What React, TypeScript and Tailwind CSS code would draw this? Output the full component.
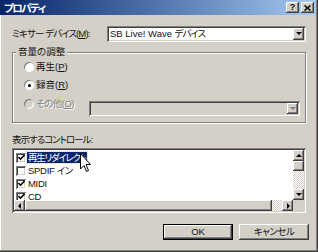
const raised =
  'shadow-[inset_-1px_-1px_#404040,inset_1px_1px_#ffffff,inset_-2px_-2px_#808080]';
const sunken =
  'shadow-[inset_1px_1px_#808080,inset_-1px_-1px_#ffffff,inset_2px_2px_#404040,inset_-2px_-2px_#d4d0c8]';

function Arrow({ dir, disabled }: { dir: 'up' | 'down' | 'left' | 'right'; disabled?: boolean }) {
  const pts = {
    up: '1,5 7,5 4,2',
    down: '1,2 7,2 4,5',
    left: '5,1 5,7 2,4',
    right: '3,1 3,7 6,4',
  }[dir];
  return (
    <svg width="8" height="8" viewBox="0 0 8 8">
      <polygon points={pts} fill={disabled ? '#808080' : '#000'} />
    </svg>
  );
}

function ScrollBtn({ dir, className = '' }: { dir: 'up' | 'down' | 'left' | 'right'; className?: string }) {
  return (
    <div className={`flex items-center justify-center bg-[#d4d0c8] ${raised} ${className}`}>
      <Arrow dir={dir} />
    </div>
  );
}

function Radio({ checked, disabled }: { checked?: boolean; disabled?: boolean }) {
  return (
    <div
      className={`flex h-[10px] w-[10px] items-center justify-center rounded-full shadow-[inset_1px_1px_#808080,inset_-1px_-1px_#ffffff] ${
        disabled ? 'bg-[#d4d0c8]' : 'bg-white'
      }`}
    >
      {checked && <div className="h-[3px] w-[3px] rounded-full bg-black" />}
    </div>
  );
}

function Check({ checked }: { checked?: boolean }) {
  return (
    <div className={`flex h-[10px] w-[10px] shrink-0 items-center justify-center bg-white ${sunken}`}>
      {checked && (
        <svg width="7" height="7" viewBox="0 0 7 7">
          <polyline points="0.5,3 2.5,5.2 6.5,1" fill="none" stroke="#000" strokeWidth="1.6" />
        </svg>
      )}
    </div>
  );
}

function U({ c }: { c: string }) {
  return (
    <>
      (<span className="underline underline-offset-1">{c}</span>)
    </>
  );
}

export default function App() {
  const items = [
    { label: '再生リダイレクト', checked: true, selected: true },
    { label: 'SPDIF イン', checked: false },
    { label: 'MIDI', checked: true },
    { label: 'CD', checked: true },
  ];

  return (
    <div className="flex h-[252px] w-[318px] flex-col bg-[#d4d0c8] font-['Liberation_Sans','Noto_Sans_CJK_JP',sans-serif] text-[9.5px] leading-[12px] text-[#111] [font-feature-settings:'palt'] shadow-[inset_-1px_-1px_#404040,inset_-2px_-2px_#808080,inset_1px_0_#ffffff]">
      {/* title bar */}
      <div className="mr-[2px] flex h-[15px] items-center bg-linear-to-r from-[#0a246a] to-[#a6caf0] pl-[4px] pr-[2px]">
        <span className="flex-1 text-[10.5px] font-bold tracking-[-1.5px] text-white">プロパティ</span>
        <div className="flex gap-[2px]">
          <div className={`flex h-[11px] w-[13px] items-center justify-center bg-[#d4d0c8] text-[9px] font-bold leading-none ${raised}`}>
            ?
          </div>
          <div className={`flex h-[11px] w-[13px] items-center justify-center bg-[#d4d0c8] ${raised}`}>
            <svg width="7" height="6" viewBox="0 0 7 6">
              <path d="M0.5 0.5 L6.5 5.5 M6.5 0.5 L0.5 5.5" stroke="#000" strokeWidth="1.5" />
            </svg>
          </div>
        </div>
      </div>

      <div className="flex flex-col px-[12px]">
        {/* mixer device */}
        <div className="mt-[11px] flex h-[16px] items-center">
          <span className="w-[95px] tracking-[-0.9px]">
            ミキサー デバイス<U c="M" />:
          </span>
          <div className={`flex h-[16px] flex-1 items-center bg-white pl-[3px] pr-[2px] ${sunken}`}>
            <span className="flex-1">
              SB Live! Wave <span className="tracking-[-1px]">デバイス</span>
            </span>
            <ScrollBtn dir="down" className="h-[12px] w-[11px]" />
          </div>
        </div>

        {/* volume group */}
        <div className="relative mt-[10px] flex h-[71px] flex-col border border-[#808080] pl-[11px] pr-[5px] pt-[5px] shadow-[inset_1px_1px_#ffffff,1px_1px_#ffffff]">
          <span className="absolute -top-[7px] left-[3px] bg-[#d4d0c8] px-[2px]">音量の調整</span>
          <div className="flex h-[18px] items-center gap-[2px]">
            <Radio />
            <span>
              再生<U c="P" />
            </span>
          </div>
          <div className="flex h-[18px] items-center gap-[2px]">
            <Radio checked />
            <span>
              録音<U c="R" />
            </span>
          </div>
          <div className="flex items-start">
            <div className="flex h-[19px] items-center gap-[2px] text-[#808080] [text-shadow:1px_1px_#ffffff]">
              <Radio disabled />
              <span className="tracking-[-0.5px]">
                その他<U c="O" />
              </span>
            </div>
            <div className={`ml-auto mt-[7px] flex h-[15px] w-[211px] items-center justify-end bg-[#d4d0c8] pr-[2px] ${sunken}`}>
              <div className={`flex h-[11px] w-[11px] items-center justify-center bg-[#d4d0c8] ${raised}`}>
                <Arrow dir="down" disabled />
              </div>
            </div>
          </div>
        </div>

        {/* controls list */}
        <div className="mt-[11px] tracking-[-1px]">表示するコントロール:</div>
        <div className={`mt-[2px] h-[65px] bg-white p-[2px] ${sunken}`}>
          <div className="grid h-full grid-cols-[1fr_11px] grid-rows-[1fr_11px]">
            <div className="relative overflow-hidden pt-[1px]">
              {items.map((it) => (
                <div key={it.label} className="flex h-[13px] items-center pl-[2px]">
                  <Check checked={it.checked} />
                  <span
                    className={`ml-[1px] px-[1px] leading-[11px] ${
                      it.selected
                        ? 'bg-[#0a246a] tracking-[-1.3px] text-white outline outline-1 outline-dotted outline-[#d4d0c8]'
                        : 'tracking-[-0.3px]'
                    }`}
                  >
                    {it.label}
                  </span>
                </div>
              ))}
              <svg
                className="absolute left-[66px] top-[3px]"
                width="12"
                height="20"
                viewBox="0 0 12 20"
              >
                <path
                  d="M0.5 0.5 L0.5 16 L4 12.5 L6.5 18.5 L8.5 17.5 L6 11.5 L10.5 11.5 Z"
                  fill="#fff"
                  stroke="#000"
                  strokeWidth="1"
                />
              </svg>
            </div>
            <div className="flex flex-col">
              <ScrollBtn dir="up" className="h-[11px]" />
              <div className={`h-[10px] bg-[#d4d0c8] ${raised}`} />
              <div className="flex-1 bg-[image:repeating-conic-gradient(#ffffff_0_25%,#d4d0c8_0_50%)] bg-[length:2px_2px]" />
              <ScrollBtn dir="down" className="h-[11px]" />
            </div>
            <div className="flex">
              <ScrollBtn dir="left" className="w-[11px]" />
              <div className={`flex-1 bg-[#d4d0c8] ${raised}`} />
              <div className="w-[10px] bg-[image:repeating-conic-gradient(#ffffff_0_25%,#d4d0c8_0_50%)] bg-[length:2px_2px]" />
              <ScrollBtn dir="right" className="w-[11px]" />
            </div>
            <div className="bg-[#d4d0c8]" />
          </div>
        </div>

        {/* buttons */}
        <div className="-mr-[3px] mt-[11px] flex justify-end gap-[6px]">
          <div className="h-[16px] w-[70px] border border-black">
            <div className={`flex h-full items-center justify-center bg-[#d4d0c8] ${raised}`}>OK</div>
          </div>
          <div className={`flex h-[16px] w-[70px] items-center justify-center bg-[#d4d0c8] tracking-[-0.5px] ${raised}`}>
            キャンセル
          </div>
        </div>
      </div>
    </div>
  );
}
